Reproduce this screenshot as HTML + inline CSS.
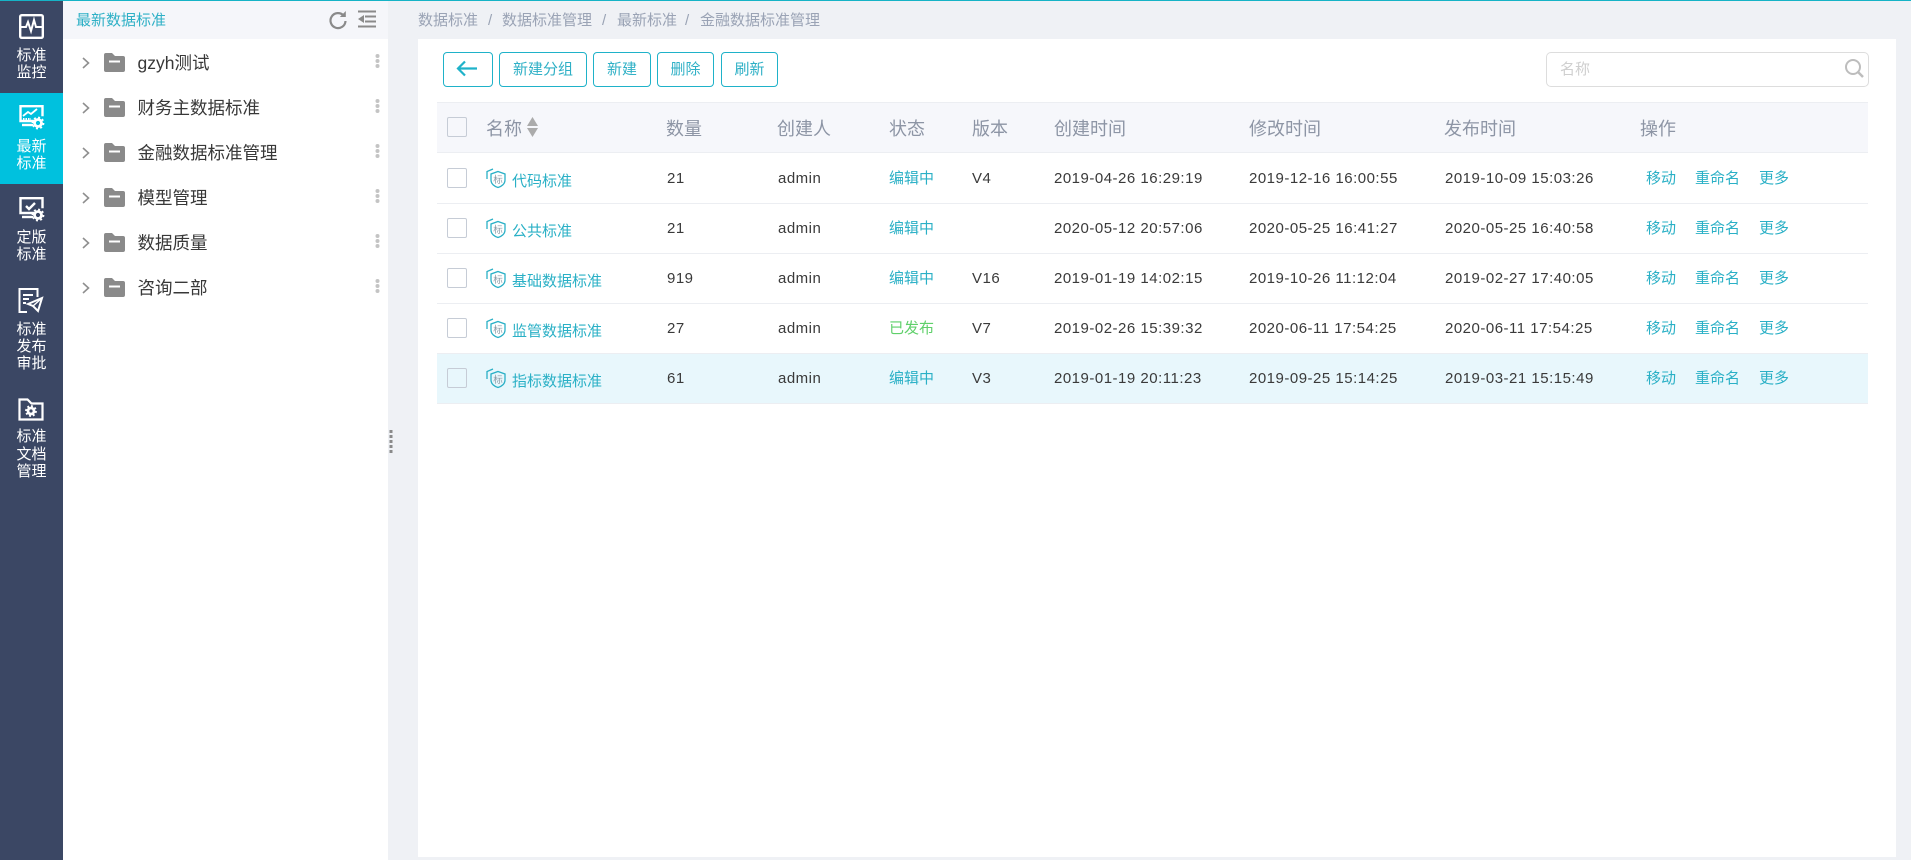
<!DOCTYPE html>
<html lang="zh">
<head>
<meta charset="utf-8">
<title>最新数据标准</title>
<style>
*{box-sizing:border-box;margin:0;padding:0}
html,body{width:1911px;height:860px;overflow:hidden;background:#eff1f5;font-family:"Liberation Sans","Noto Sans CJK SC",sans-serif;font-size:15px}
.a{position:absolute;white-space:nowrap}
svg{position:absolute;display:block;overflow:visible}
#top{left:0;top:0;width:1911px;height:1px;background:#16b3c6}
#side{left:0;top:1px;width:63px;height:859px;background:#3b4764}
#act{left:0;top:93px;width:63px;height:91px;background:#00c1de}
.sl{left:0;width:63px;text-align:center;color:#fff;font-size:15px;line-height:17px;height:17px}
#tree{left:63px;top:1px;width:325px;height:859px;background:#fff}
#treeh{left:63px;top:1px;width:325px;height:38px;background:#f5f6fa}
.tt{left:137.500px;font-size:17.500px;line-height:24px;height:24px;color:#383838}
.bc{top:11px;line-height:20px;color:#9aa3b5;font-size:15px}
#main{left:418px;top:39px;width:1478px;height:818px;background:#fff}
.btn{top:52px;height:35px;border:1px solid #1fb2c9;border-radius:4px;background:#fff;color:#2fb0c6;font-size:15px;line-height:34px;text-align:center}
#search{left:1546px;top:52px;width:323px;height:35px;border:1px solid #ddd;border-radius:5px;background:#fff}
#thead{left:437px;top:102px;width:1431px;height:51px;background:#f6f7fb;border-top:1px solid #eceef2;border-bottom:1px solid #eceef2}
.th{top:117px;line-height:24px;height:24px;font-size:18px;color:#8d95a5}
.row{left:437px;width:1431px;height:50px;background:#fff;border-bottom:1px solid #eceef2}
.cb{left:447px;width:20px;height:20px;border:1px solid #c6ccd6;border-radius:2px;background:#fff}
.c{line-height:20px;height:20px;font-size:15px;color:#3a3a3a;letter-spacing:.5px}
.l{color:#2ab0c6;letter-spacing:0}
.g{color:#5fd06a;letter-spacing:0}
.n{color:#2ab0c6;letter-spacing:0}
</style>
</head>
<body>
<div class="a" id="top"></div>
<div class="a" id="side"></div>
<div class="a" id="act"></div>

<svg style="left:19px;top:14px" width="25" height="25" viewBox="0 0 25 25" fill="none" stroke="#fff" stroke-width="2.400"><rect x="1.200" y="1.200" width="22.600" height="22.600" rx="1.500"/><path d="M2 13h5l2-5 3 9 3-11 2 7h6" stroke-width="2"/></svg>
<div class="a sl" style="top:47px">标准</div>
<div class="a sl" style="top:64px">监控</div>

<svg style="left:19px;top:105px" width="25" height="25" viewBox="0 0 25 25" fill="none" stroke="#fff" stroke-width="2.400"><path d="M16 16H1.500V1.200h22v10"/><path d="M4 11l5-4 3 2 6-5" stroke-width="1.800"/><path d="M4 14h8" stroke-width="2" stroke-dasharray="1.500 1"/><path d="M3 20h11"/><circle cx="19" cy="18" r="3.500" stroke-width="2.800"/><circle cx="19" cy="18" r="5.500" stroke-width="1.800" stroke-dasharray="2 2.300"/></svg>
<div class="a sl" style="top:138px">最新</div>
<div class="a sl" style="top:155px">标准</div>

<svg style="left:19px;top:197px" width="25" height="25" viewBox="0 0 25 25" fill="none" stroke="#fff" stroke-width="2.400"><path d="M15 16H1.500V1.200h22v10"/><path d="M7 9l3 3 6-6"/><path d="M3 20h11"/><circle cx="19" cy="18" r="3.500" stroke-width="2.800"/><circle cx="19" cy="18" r="5.500" stroke-width="1.800" stroke-dasharray="2 2.300"/></svg>
<div class="a sl" style="top:229px">定版</div>
<div class="a sl" style="top:246px">标准</div>

<svg style="left:18px;top:288px" width="26" height="25" viewBox="0 0 26 25" fill="none" stroke="#fff" stroke-width="2"><path d="M9 24H1.500V1h18v8"/><path d="M5 7h10M5 11h6M5 15h3"/><path d="M10 16l14-6-4 13-5-5z"/><path d="M15 18l9-8" stroke-width="1.500"/></svg>
<div class="a sl" style="top:321px">标准</div>
<div class="a sl" style="top:338px">发布</div>
<div class="a sl" style="top:355px">审批</div>

<svg style="left:18px;top:398px" width="26" height="23" viewBox="0 0 26 23" fill="none" stroke="#fff" stroke-width="2.200"><path d="M1.500 1.500h8l4 4h11v16h-23z"/><circle cx="13" cy="13" r="3" stroke-width="2.800"/><circle cx="13" cy="13" r="5" stroke-width="1.800" stroke-dasharray="2 1.900"/></svg>
<div class="a sl" style="top:428px">标准</div>
<div class="a sl" style="top:446px">文档</div>
<div class="a sl" style="top:463px">管理</div>

<div class="a" id="tree"></div>
<div class="a" id="treeh"></div>
<div class="a" style="left:76px;top:11px;line-height:20px;font-size:15px;color:#2fb0c6">最新数据标准</div>
<svg style="left:329px;top:10px" width="18" height="19" viewBox="0 0 18 19" fill="none" stroke="#8a8a8a" stroke-width="2.200"><path d="M14.500 5.500A7.500 7.500 0 1 0 16.500 11"/><path d="M16.800 1v6h-6" fill="#8a8a8a" stroke="none"/></svg>
<svg style="left:358px;top:10px" width="19" height="18" viewBox="0 0 19 18" fill="none" stroke="#8a8a8a" stroke-width="2"><path d="M0 1.500h18M7 6.500h11M7 11.500h11M0 16.500h18"/><path d="M6 5v8L0 9z" fill="#8a8a8a" stroke="none"/></svg>

<svg style="left:82px;top:57px" width="8" height="12" viewBox="0 0 8 12" fill="none" stroke="#8f8f8f" stroke-width="1.600"><path d="M1 1l5.500 5L1 11"/></svg>
<svg style="left:104px;top:53px" width="21" height="19" viewBox="0 0 21 19"><path fill="#8a8a8a" d="M2 0h6l3 3h8a2 2 0 0 1 2 2v12a2 2 0 0 1-2 2H2a2 2 0 0 1-2-2V2a2 2 0 0 1 2-2z"/><path fill="#fff" d="M5 7.500h11v2H5z"/></svg>
<div class="a tt" style="top:51px">gzyh测试</div>
<svg style="left:375px;top:54px" width="5" height="14" viewBox="0 0 5 14" fill="#c4c4c4"><circle cx="2.500" cy="2" r="2"/><circle cx="2.500" cy="7" r="2"/><circle cx="2.500" cy="12" r="2"/></svg>

<svg style="left:82px;top:102px" width="8" height="12" viewBox="0 0 8 12" fill="none" stroke="#8f8f8f" stroke-width="1.600"><path d="M1 1l5.500 5L1 11"/></svg>
<svg style="left:104px;top:98px" width="21" height="19" viewBox="0 0 21 19"><path fill="#8a8a8a" d="M2 0h6l3 3h8a2 2 0 0 1 2 2v12a2 2 0 0 1-2 2H2a2 2 0 0 1-2-2V2a2 2 0 0 1 2-2z"/><path fill="#fff" d="M5 7.500h11v2H5z"/></svg>
<div class="a tt" style="top:96px">财务主数据标准</div>
<svg style="left:375px;top:99px" width="5" height="14" viewBox="0 0 5 14" fill="#c4c4c4"><circle cx="2.500" cy="2" r="2"/><circle cx="2.500" cy="7" r="2"/><circle cx="2.500" cy="12" r="2"/></svg>

<svg style="left:82px;top:147px" width="8" height="12" viewBox="0 0 8 12" fill="none" stroke="#8f8f8f" stroke-width="1.600"><path d="M1 1l5.500 5L1 11"/></svg>
<svg style="left:104px;top:143px" width="21" height="19" viewBox="0 0 21 19"><path fill="#8a8a8a" d="M2 0h6l3 3h8a2 2 0 0 1 2 2v12a2 2 0 0 1-2 2H2a2 2 0 0 1-2-2V2a2 2 0 0 1 2-2z"/><path fill="#fff" d="M5 7.500h11v2H5z"/></svg>
<div class="a tt" style="top:141px">金融数据标准管理</div>
<svg style="left:375px;top:144px" width="5" height="14" viewBox="0 0 5 14" fill="#c4c4c4"><circle cx="2.500" cy="2" r="2"/><circle cx="2.500" cy="7" r="2"/><circle cx="2.500" cy="12" r="2"/></svg>

<svg style="left:82px;top:192px" width="8" height="12" viewBox="0 0 8 12" fill="none" stroke="#8f8f8f" stroke-width="1.600"><path d="M1 1l5.500 5L1 11"/></svg>
<svg style="left:104px;top:188px" width="21" height="19" viewBox="0 0 21 19"><path fill="#8a8a8a" d="M2 0h6l3 3h8a2 2 0 0 1 2 2v12a2 2 0 0 1-2 2H2a2 2 0 0 1-2-2V2a2 2 0 0 1 2-2z"/><path fill="#fff" d="M5 7.500h11v2H5z"/></svg>
<div class="a tt" style="top:186px">模型管理</div>
<svg style="left:375px;top:189px" width="5" height="14" viewBox="0 0 5 14" fill="#c4c4c4"><circle cx="2.500" cy="2" r="2"/><circle cx="2.500" cy="7" r="2"/><circle cx="2.500" cy="12" r="2"/></svg>

<svg style="left:82px;top:237px" width="8" height="12" viewBox="0 0 8 12" fill="none" stroke="#8f8f8f" stroke-width="1.600"><path d="M1 1l5.500 5L1 11"/></svg>
<svg style="left:104px;top:233px" width="21" height="19" viewBox="0 0 21 19"><path fill="#8a8a8a" d="M2 0h6l3 3h8a2 2 0 0 1 2 2v12a2 2 0 0 1-2 2H2a2 2 0 0 1-2-2V2a2 2 0 0 1 2-2z"/><path fill="#fff" d="M5 7.500h11v2H5z"/></svg>
<div class="a tt" style="top:231px">数据质量</div>
<svg style="left:375px;top:234px" width="5" height="14" viewBox="0 0 5 14" fill="#c4c4c4"><circle cx="2.500" cy="2" r="2"/><circle cx="2.500" cy="7" r="2"/><circle cx="2.500" cy="12" r="2"/></svg>

<svg style="left:82px;top:282px" width="8" height="12" viewBox="0 0 8 12" fill="none" stroke="#8f8f8f" stroke-width="1.600"><path d="M1 1l5.500 5L1 11"/></svg>
<svg style="left:104px;top:278px" width="21" height="19" viewBox="0 0 21 19"><path fill="#8a8a8a" d="M2 0h6l3 3h8a2 2 0 0 1 2 2v12a2 2 0 0 1-2 2H2a2 2 0 0 1-2-2V2a2 2 0 0 1 2-2z"/><path fill="#fff" d="M5 7.500h11v2H5z"/></svg>
<div class="a tt" style="top:276px">咨询二部</div>
<svg style="left:375px;top:279px" width="5" height="14" viewBox="0 0 5 14" fill="#c4c4c4"><circle cx="2.500" cy="2" r="2"/><circle cx="2.500" cy="7" r="2"/><circle cx="2.500" cy="12" r="2"/></svg>

<svg style="left:389px;top:430px" width="4" height="23" viewBox="0 0 4 23" fill="#8a8a8a"><rect x="0.500" y="0" width="3" height="3"/><rect x="0.500" y="5" width="3" height="3"/><rect x="0.500" y="10" width="3" height="3"/><rect x="0.500" y="15" width="3" height="3"/><rect x="0.500" y="20" width="3" height="3"/></svg>

<div class="a bc" style="left:418px">数据标准</div>
<div class="a bc" style="left:488px">/</div>
<div class="a bc" style="left:502px">数据标准管理</div>
<div class="a bc" style="left:602px">/</div>
<div class="a bc" style="left:617px">最新标准</div>
<div class="a bc" style="left:685px">/</div>
<div class="a bc" style="left:700px">金融数据标准管理</div>

<div class="a" id="main"></div>

<div class="a btn" style="left:443px;width:50px"></div>
<svg style="left:456px;top:60px" width="22" height="17" viewBox="0 0 22 17" fill="none" stroke="#1fb2c9" stroke-width="2.200"><path d="M21 8.500H2M9 1.500l-7 7 7 7"/></svg>
<div class="a btn" style="left:499px;width:88px">新建分组</div>
<div class="a btn" style="left:593px;width:58px">新建</div>
<div class="a btn" style="left:657px;width:57px">删除</div>
<div class="a btn" style="left:721px;width:57px">刷新</div>

<div class="a" id="search"></div>
<div class="a" style="left:1560px;top:60px;line-height:20px;font-size:15px;color:#cfcfcf">名称</div>
<svg style="left:1845px;top:59px" width="19" height="19" viewBox="0 0 19 19" fill="none" stroke="#bdbdbd" stroke-width="2"><circle cx="8" cy="8" r="7"/><path d="M13 13l5 5" stroke-width="2.500"/></svg>

<div class="a" id="thead"></div>
<div class="a cb" style="top:117px;background:#f6f7fb"></div>
<div class="a th" style="left:486px">名称</div>
<svg style="left:527px;top:117px" width="11" height="20" viewBox="0 0 11 20" fill="#ababab"><path d="M5.500 0L11 9H0zM0 11h11l-5.500 9z"/></svg>
<div class="a th" style="left:666px">数量</div>
<div class="a th" style="left:777px">创建人</div>
<div class="a th" style="left:889px">状态</div>
<div class="a th" style="left:972px">版本</div>
<div class="a th" style="left:1054px">创建时间</div>
<div class="a th" style="left:1249px">修改时间</div>
<div class="a th" style="left:1444px">发布时间</div>
<div class="a th" style="left:1640px">操作</div>

<!-- row 1 -->
<div class="a row" style="top:153px;height:51px"></div>
<div class="a cb" style="top:168px"></div>
<svg style="left:486px;top:168px" width="20" height="20" viewBox="0 0 20 20" fill="none" stroke="#2ab0c6" stroke-width="1.300"><path d="M1 11V3.500L7 1"/><path d="M12 3.500l7 2.500v6c0 4-3.500 6.500-7 7.500-3.500-1-7-3.500-7-7.500V6z"/><text x="12" y="15" font-size="9.500" text-anchor="middle" fill="#8b9aa5" stroke="none" font-family="Liberation Sans,Noto Sans CJK SC,sans-serif">标</text></svg>
<div class="a c n" style="left:512px;top:172px">代码标准</div>
<div class="a c" style="left:667px;top:169px">21</div>
<div class="a c" style="left:778px;top:169px">admin</div>
<div class="a c l" style="left:889px;top:169px">编辑中</div>
<div class="a c" style="left:972px;top:169px">V4</div>
<div class="a c" style="left:1054px;top:169px">2019-04-26 16:29:19</div>
<div class="a c" style="left:1249px;top:169px">2019-12-16 16:00:55</div>
<div class="a c" style="left:1445px;top:169px">2019-10-09 15:03:26</div>
<div class="a c l" style="left:1646px;top:169px">移动</div>
<div class="a c l" style="left:1695px;top:169px">重命名</div>
<div class="a c l" style="left:1759px;top:169px">更多</div>

<!-- row 2 -->
<div class="a row" style="top:204px"></div>
<div class="a cb" style="top:218px"></div>
<svg style="left:486px;top:218px" width="20" height="20" viewBox="0 0 20 20" fill="none" stroke="#2ab0c6" stroke-width="1.300"><path d="M1 11V3.500L7 1"/><path d="M12 3.500l7 2.500v6c0 4-3.500 6.500-7 7.500-3.500-1-7-3.500-7-7.500V6z"/><text x="12" y="15" font-size="9.500" text-anchor="middle" fill="#8b9aa5" stroke="none" font-family="Liberation Sans,Noto Sans CJK SC,sans-serif">标</text></svg>
<div class="a c n" style="left:512px;top:222px">公共标准</div>
<div class="a c" style="left:667px;top:219px">21</div>
<div class="a c" style="left:778px;top:219px">admin</div>
<div class="a c l" style="left:889px;top:219px">编辑中</div>
<div class="a c" style="left:1054px;top:219px">2020-05-12 20:57:06</div>
<div class="a c" style="left:1249px;top:219px">2020-05-25 16:41:27</div>
<div class="a c" style="left:1445px;top:219px">2020-05-25 16:40:58</div>
<div class="a c l" style="left:1646px;top:219px">移动</div>
<div class="a c l" style="left:1695px;top:219px">重命名</div>
<div class="a c l" style="left:1759px;top:219px">更多</div>

<!-- row 3 -->
<div class="a row" style="top:254px"></div>
<div class="a cb" style="top:268px"></div>
<svg style="left:486px;top:268px" width="20" height="20" viewBox="0 0 20 20" fill="none" stroke="#2ab0c6" stroke-width="1.300"><path d="M1 11V3.500L7 1"/><path d="M12 3.500l7 2.500v6c0 4-3.500 6.500-7 7.500-3.500-1-7-3.500-7-7.500V6z"/><text x="12" y="15" font-size="9.500" text-anchor="middle" fill="#8b9aa5" stroke="none" font-family="Liberation Sans,Noto Sans CJK SC,sans-serif">标</text></svg>
<div class="a c n" style="left:512px;top:272px">基础数据标准</div>
<div class="a c" style="left:667px;top:269px">919</div>
<div class="a c" style="left:778px;top:269px">admin</div>
<div class="a c l" style="left:889px;top:269px">编辑中</div>
<div class="a c" style="left:972px;top:269px">V16</div>
<div class="a c" style="left:1054px;top:269px">2019-01-19 14:02:15</div>
<div class="a c" style="left:1249px;top:269px">2019-10-26 11:12:04</div>
<div class="a c" style="left:1445px;top:269px">2019-02-27 17:40:05</div>
<div class="a c l" style="left:1646px;top:269px">移动</div>
<div class="a c l" style="left:1695px;top:269px">重命名</div>
<div class="a c l" style="left:1759px;top:269px">更多</div>

<!-- row 4 -->
<div class="a row" style="top:304px"></div>
<div class="a cb" style="top:318px"></div>
<svg style="left:486px;top:318px" width="20" height="20" viewBox="0 0 20 20" fill="none" stroke="#2ab0c6" stroke-width="1.300"><path d="M1 11V3.500L7 1"/><path d="M12 3.500l7 2.500v6c0 4-3.500 6.500-7 7.500-3.500-1-7-3.500-7-7.500V6z"/><text x="12" y="15" font-size="9.500" text-anchor="middle" fill="#8b9aa5" stroke="none" font-family="Liberation Sans,Noto Sans CJK SC,sans-serif">标</text></svg>
<div class="a c n" style="left:512px;top:322px">监管数据标准</div>
<div class="a c" style="left:667px;top:319px">27</div>
<div class="a c" style="left:778px;top:319px">admin</div>
<div class="a c g" style="left:889px;top:319px">已发布</div>
<div class="a c" style="left:972px;top:319px">V7</div>
<div class="a c" style="left:1054px;top:319px">2019-02-26 15:39:32</div>
<div class="a c" style="left:1249px;top:319px">2020-06-11 17:54:25</div>
<div class="a c" style="left:1445px;top:319px">2020-06-11 17:54:25</div>
<div class="a c l" style="left:1646px;top:319px">移动</div>
<div class="a c l" style="left:1695px;top:319px">重命名</div>
<div class="a c l" style="left:1759px;top:319px">更多</div>

<!-- row 5 -->
<div class="a row" style="top:354px;background:#e8f7fc"></div>
<div class="a cb" style="top:368px;background:#e8f7fc"></div>
<svg style="left:486px;top:368px" width="20" height="20" viewBox="0 0 20 20" fill="none" stroke="#2ab0c6" stroke-width="1.300"><path d="M1 11V3.500L7 1"/><path d="M12 3.500l7 2.500v6c0 4-3.500 6.500-7 7.500-3.500-1-7-3.500-7-7.500V6z"/><text x="12" y="15" font-size="9.500" text-anchor="middle" fill="#8b9aa5" stroke="none" font-family="Liberation Sans,Noto Sans CJK SC,sans-serif">标</text></svg>
<div class="a c n" style="left:512px;top:372px">指标数据标准</div>
<div class="a c" style="left:667px;top:369px">61</div>
<div class="a c" style="left:778px;top:369px">admin</div>
<div class="a c l" style="left:889px;top:369px">编辑中</div>
<div class="a c" style="left:972px;top:369px">V3</div>
<div class="a c" style="left:1054px;top:369px">2019-01-19 20:11:23</div>
<div class="a c" style="left:1249px;top:369px">2019-09-25 15:14:25</div>
<div class="a c" style="left:1445px;top:369px">2019-03-21 15:15:49</div>
<div class="a c l" style="left:1646px;top:369px">移动</div>
<div class="a c l" style="left:1695px;top:369px">重命名</div>
<div class="a c l" style="left:1759px;top:369px">更多</div>
</body>
</html>
